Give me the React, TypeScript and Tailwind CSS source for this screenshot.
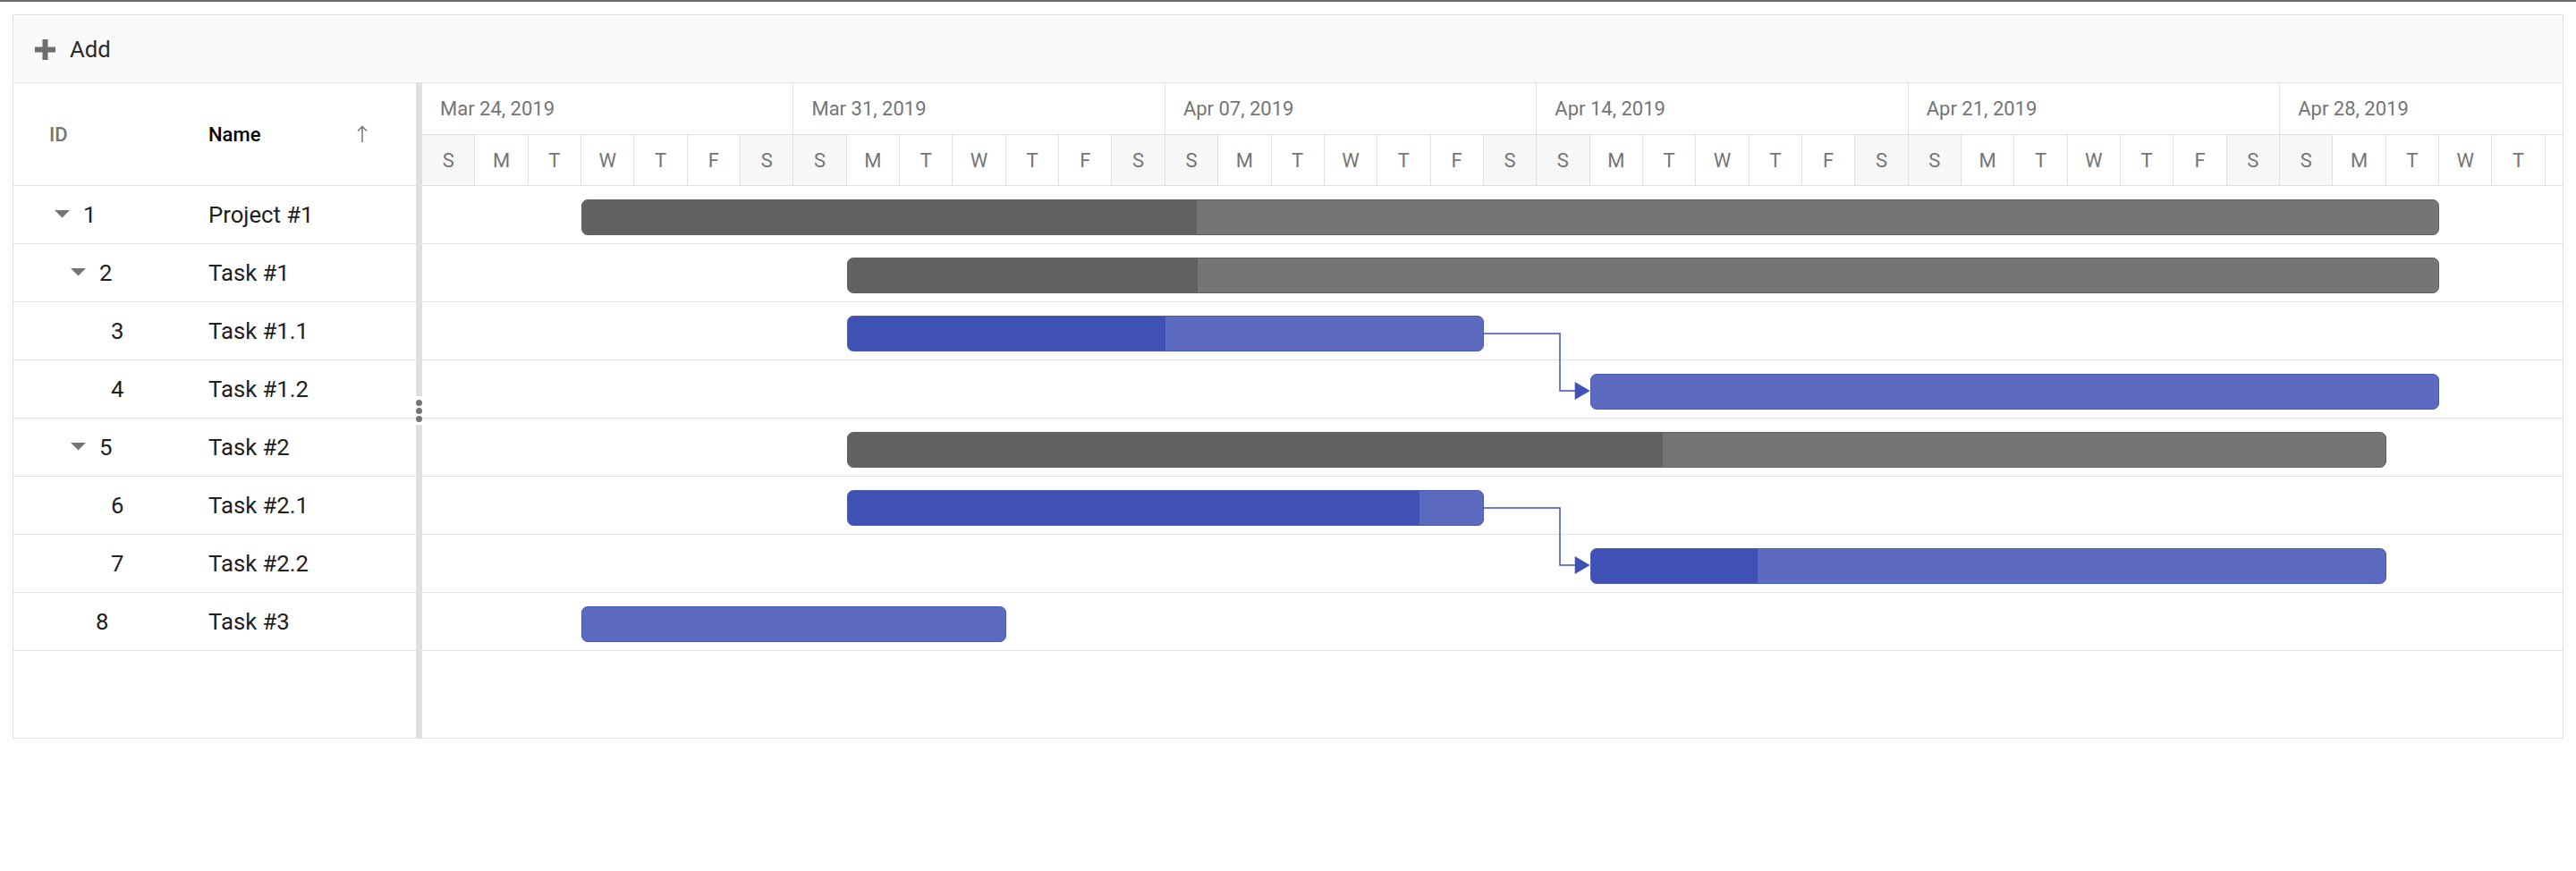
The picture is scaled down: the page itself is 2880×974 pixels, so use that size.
import React from "react";

const DAY = 59.35;
const ROW = 65;
const LETTERS = ["S", "M", "T", "W", "T", "F", "S"];
const WEEKS = ["Mar 24, 2019", "Mar 31, 2019", "Apr 07, 2019", "Apr 14, 2019", "Apr 21, 2019", "Apr 28, 2019"];

type Row = { id: string; name: string; pad: string; caret: boolean };
const ROWS: Row[] = [
  { id: "1", name: "Project #1", pad: "pl-[46px]", caret: true },
  { id: "2", name: "Task #1", pad: "pl-[64px]", caret: true },
  { id: "3", name: "Task #1.1", pad: "pl-[109px]", caret: false },
  { id: "4", name: "Task #1.2", pad: "pl-[109px]", caret: false },
  { id: "5", name: "Task #2", pad: "pl-[64px]", caret: true },
  { id: "6", name: "Task #2.1", pad: "pl-[109px]", caret: false },
  { id: "7", name: "Task #2.2", pad: "pl-[109px]", caret: false },
  { id: "8", name: "Task #3", pad: "pl-[92px]", caret: false },
];

type Bar = { row: number; start: number; end: number; progress: number; gray: boolean };
const BARS: Bar[] = [
  { row: 0, start: 3, end: 38, progress: 0.331, gray: true },
  { row: 1, start: 8, end: 38, progress: 0.22, gray: true },
  { row: 2, start: 8, end: 20, progress: 0.5, gray: false },
  { row: 3, start: 22, end: 38, progress: 0, gray: false },
  { row: 4, start: 8, end: 37, progress: 0.53, gray: true },
  { row: 5, start: 8, end: 20, progress: 0.9, gray: false },
  { row: 6, start: 22, end: 37, progress: 0.21, gray: false },
  { row: 7, start: 3, end: 11, progress: 0, gray: false },
];

const LINKS = [
  { from: 2, to: 3 },
  { from: 5, to: 6 },
];

function Caret() {
  return (
    <svg width="17" height="9" viewBox="0 0 17 9" className="mr-[15px] shrink-0">
      <polygon points="0,0 17,0 8.5,8.5" fill="#757575" />
    </svg>
  );
}

function PlusIcon() {
  return (
    <svg width="23" height="23" viewBox="0 0 23 23" className="shrink-0">
      <rect x="8.5" y="0" width="6" height="23" fill="#6e6e6e" />
      <rect x="0" y="8.5" width="23" height="6" fill="#6e6e6e" />
    </svg>
  );
}

function SortArrow() {
  return (
    <svg width="12" height="20" viewBox="0 0 12 20" className="shrink-0">
      <path d="M6 1.5 V19 M1 6.5 L6 1.5 L11 6.5" stroke="#757575" strokeWidth="1.5" fill="none" />
    </svg>
  );
}

export default function App() {
  const days = Array.from({ length: 41 }, (_, i) => i);
  return (
    <div className="font-['Roboto','Liberation_Sans',sans-serif] bg-white w-[2880px] h-[974px] overflow-hidden">
      <div className="h-[2px] bg-[#6b6b6b]" />
      <div className="mt-[14px] ml-[14px] w-[2852px] h-[810px] border border-[#e0e0e0] flex flex-col overflow-hidden">
        {/* Toolbar */}
        <div className="h-[76px] shrink-0 bg-[#fafafa] border-b border-[#e0e0e0] flex items-center pl-[24px] pt-[2px]">
          <PlusIcon />
          <span className="ml-[16px] text-[25.7px] text-[#2b2b2b]">Add</span>
        </div>
        {/* Body */}
        <div className="flex flex-1 min-h-0">
          {/* Left tree list */}
          <div className="w-[450px] shrink-0 flex flex-col">
            <div className="h-[115px] shrink-0 border-b border-[#e0e0e0] flex items-center">
              <div className="w-[189px] pl-[40px] text-[22px] font-medium text-[#757575]">ID</div>
              <div className="flex-1 flex items-center pl-[29px]">
                <span className="text-[22px] font-medium text-black">Name</span>
                <div className="ml-auto mr-[54px]">
                  <SortArrow />
                </div>
              </div>
            </div>
            {ROWS.map((r) => (
              <div key={r.id} className="h-[65px] shrink-0 border-b border-[#e0e0e0] flex items-center text-[25.7px] text-[#212121]">
                <div className={"w-[189px] flex items-center " + r.pad}>
                  {r.caret && <Caret />}
                  <span>{r.id}</span>
                </div>
                <div className="flex-1 pl-[29px]">{r.name}</div>
              </div>
            ))}
          </div>
          {/* Splitter */}
          <div className="w-[7px] shrink-0 flex flex-col">
            <div className="flex-1 bg-[#e0e0e0]" />
            <div className="h-[32px] relative flex flex-col items-center justify-center gap-[2px] bg-white">
              <div className="absolute left-0 right-0 top-[25px] h-[1px] bg-[#e0e0e0]" />
              <div className="relative w-[7px] h-[7px] rounded-full bg-[#757575]" />
              <div className="relative w-[7px] h-[7px] rounded-full bg-[#757575]" />
              <div className="relative w-[7px] h-[7px] rounded-full bg-[#757575]" />
            </div>
            <div className="flex-1 bg-[#e0e0e0]" />
          </div>
          {/* Timeline */}
          <div className="flex-1 min-w-0 overflow-hidden flex flex-col">
            <div className="h-[58px] shrink-0 border-b border-[#e0e0e0] flex">
              {WEEKS.map((w) => (
                <div key={w} className="w-[415.45px] shrink-0 h-full flex items-center pl-[20px] border-r border-[#e0e0e0] text-[22px] text-[#757575]">
                  {w}
                </div>
              ))}
            </div>
            <div className="h-[57px] shrink-0 border-b border-[#e0e0e0] flex">
              {days.map((d) => (
                <div
                  key={d}
                  className={
                    "w-[59.35px] shrink-0 h-full flex items-center justify-center border-r border-[#e0e0e0] text-[22px] text-[#757575] " +
                    (d % 7 === 0 || d % 7 === 6 ? "bg-[#f7f7f7]" : "bg-white")
                  }
                >
                  {d < 40 ? LETTERS[d % 7] : ""}
                </div>
              ))}
            </div>
            <div className="relative flex-1">
              {ROWS.map((r) => (
                <div key={r.id} className="h-[65px] border-b border-[#e0e0e0]" />
              ))}
              {BARS.map((b, i) => (
                <div
                  key={i}
                  className={
                    "absolute h-[40px] rounded-[7px] overflow-hidden border " +
                    (b.gray ? "bg-[#757575] border-[#616161]" : "bg-[#5c6bc0] border-[#4a5ab9]")
                  }
                  style={{ left: b.start * DAY, width: (b.end - b.start) * DAY, top: b.row * ROW + 15 }}
                >
                  <div
                    className={"h-full " + (b.gray ? "bg-[#616161]" : "bg-[#3f51b5]")}
                    style={{ width: `${b.progress * 100}%` }}
                  />
                </div>
              ))}
              <svg className="absolute left-0 top-0 pointer-events-none" width="2400" height="732">
                {LINKS.map((l, i) => {
                  const from = BARS[l.from];
                  const to = BARS[l.to];
                  const x1 = from.end * DAY;
                  const y1 = from.row * ROW + 35;
                  const x2 = to.start * DAY;
                  const y2 = to.row * ROW + 34;
                  const xm = x1 + 85;
                  return (
                    <g key={i}>
                      <path d={`M${x1} ${y1} H${xm} V${y2} H${x2 - 16}`} stroke="#3f51b5" strokeWidth="1.5" fill="none" />
                      <polygon points={`${x2 - 17},${y2 - 10} ${x2},${y2} ${x2 - 17},${y2 + 10}`} fill="#3f51b5" />
                    </g>
                  );
                })}
              </svg>
            </div>
          </div>
        </div>
      </div>
    </div>
  );
}
